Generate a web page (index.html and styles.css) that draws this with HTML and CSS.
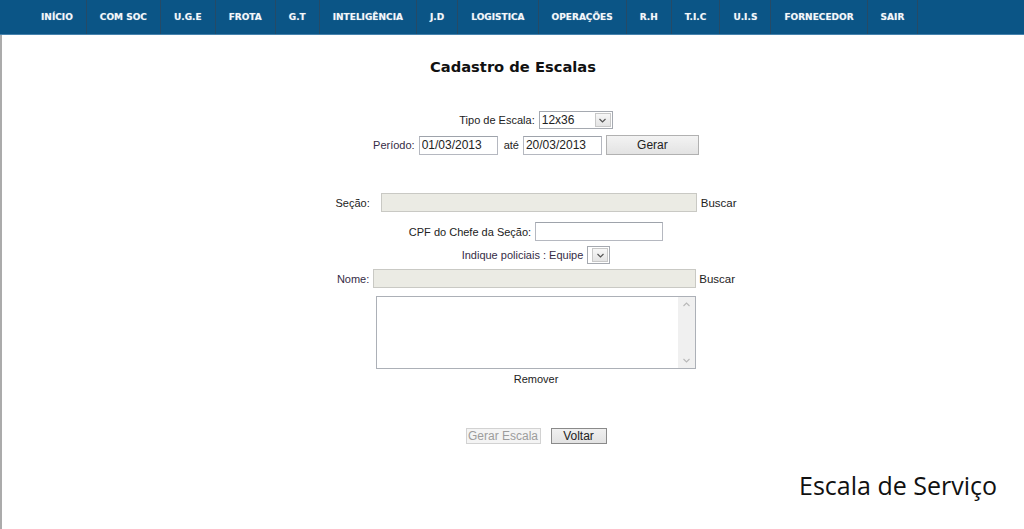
FILE: index.html
```html
<!DOCTYPE html>
<html lang="pt-br">
<head>
  <meta charset="UTF-8" />
  <title>Cadastro de Escalas</title>
  <link rel="stylesheet" href="styles.css">
</head>
<body>
  <header class="topo">
    <ul class="menu">
      <li><a href="#">INÍCIO</a></li>
      <li><a href="#">COM SOC</a></li>
      <li><a href="#">U.G.E</a></li>
      <li><a href="#">FROTA</a></li>
      <li><a href="#">G.T</a></li>
      <li><a href="#">INTELIGÊNCIA</a></li>
      <li><a href="#">J.D</a></li>
      <li><a href="#">LOGISTICA</a></li>
      <li><a href="#">OPERAÇÕES</a></li>
      <li><a href="#">R.H</a></li>
      <li><a href="#">T.I.C</a></li>
      <li><a href="#">U.I.S</a></li>
      <li><a href="#">FORNECEDOR</a></li>
      <li><a href="#">SAIR</a></li>
    </ul>
  </header>

  <main class="pagina">
    <h1 class="titulo">Cadastro de Escalas</h1>

    <form class="form">
      <div class="linha linha-tipo">
        <label>Tipo de Escala:</label>
        <div class="combo combo-tipo">
          <span class="combo-valor">12x36</span>
          <span class="combo-seta"><svg width="7" height="5" viewBox="0 0 7 5"><path d="M0.5 1 L3.5 4 L6.5 1" fill="none" stroke="#555" stroke-width="1.2"/></svg></span>
        </div>
      </div>

      <div class="linha linha-periodo">
        <label class="roxo">Período:</label>
        <input class="campo campo-data" type="text" value="01/03/2013">
        <label class="ate">até</label>
        <input class="campo campo-data" type="text" value="20/03/2013">
        <button type="button" class="botao botao-gerar">Gerar</button>
      </div>

      <div class="linha linha-secao">
        <label class="lbl-secao">Seção:</label>
        <input class="campo campo-off campo-secao" type="text" disabled>
        <a href="#" class="buscar">Buscar</a>
      </div>

      <div class="linha linha-cpf">
        <label>CPF do Chefe da Seção:</label>
        <input class="campo campo-cpf" type="text">
      </div>

      <div class="linha linha-equipe">
        <label class="roxo">Indique policiais : Equipe</label>
        <div class="combo combo-equipe">
          <span class="combo-valor"></span>
          <span class="combo-seta"><svg width="7" height="5" viewBox="0 0 7 5"><path d="M0.5 1 L3.5 4 L6.5 1" fill="none" stroke="#555" stroke-width="1.2"/></svg></span>
        </div>
      </div>

      <div class="linha linha-nome">
        <label class="roxo">Nome:</label>
        <input class="campo campo-off campo-nome" type="text" disabled>
        <a href="#" class="buscar buscar-nome">Buscar</a>
      </div>

      <div class="linha linha-lista">
        <div class="lista">
          <div class="lista-area"></div>
          <div class="lista-barra">
            <svg width="7" height="5" viewBox="0 0 7 5"><path d="M0.5 4 L3.5 1 L6.5 4" fill="none" stroke="#b8b8b8" stroke-width="1.1"/></svg>
            <svg width="7" height="5" viewBox="0 0 7 5"><path d="M0.5 1 L3.5 4 L6.5 1" fill="none" stroke="#b8b8b8" stroke-width="1.1"/></svg>
          </div>
        </div>
      </div>

      <div class="linha linha-remover">
        <a href="#" class="remover">Remover</a>
      </div>

      <div class="linha linha-botoes">
        <button type="button" class="botao botao-off" disabled>Gerar Escala</button>
        <button type="button" class="botao botao-voltar">Voltar</button>
      </div>
    </form>

    <div class="legenda">Escala de Serviço</div>
  </main>
</body>
</html>
```

FILE: styles.css
```css
body {
  margin: 0;
  background-color: white;
  font-family: "Liberation Sans", Arial, sans-serif;
  font-size: 11px;
  color: #222;
  overflow: hidden;
}

.topo {
  background-color: #0b5586;
  border-bottom: 1px solid #4682ad;
  height: 34px;
}

.menu {
  list-style: none;
  margin: 0;
  padding: 0 0 0 28px;
  display: flex;
  height: 34px;
}

.menu li {
  border-right: 1px solid #254a66;
  display: flex;
  align-items: center;
}

.menu a {
  color: #f4f7fa;
  text-decoration: none;
  font-family: "DejaVu Sans", Verdana, sans-serif;
  font-weight: bold;
  font-size: 9px;
  padding: 0 13px;
  text-shadow: 0 0 1px rgba(255, 255, 255, 0.4);
}

.pagina {
  border-left: 2px solid #ababab;
  height: 494px;
  display: flex;
  flex-direction: column;
}

.titulo {
  margin: 23px 0 0 0;
  height: 18px;
  line-height: 18px;
  text-align: center;
  font-family: "DejaVu Sans", Verdana, sans-serif;
  font-size: 14.7px;
  font-weight: bold;
  color: #111;
}

.form {
  padding-left: 46px;
  display: flex;
  flex-direction: column;
}

.linha {
  display: flex;
  justify-content: center;
  align-items: center;
}

.linha label {
  margin-right: 4px;
}

.roxo {
  color: #352c46;
}

.linha-tipo {
  margin-top: 35px;
  height: 18px;
}

.linha-periodo {
  margin-top: 6px;
  height: 20px;
}

.linha-secao {
  margin-top: 38px;
  height: 19px;
}

.linha-cpf {
  margin-top: 10px;
  height: 19px;
}

.linha-equipe {
  margin-top: 5px;
  height: 18px;
}

.linha-nome {
  margin-top: 5px;
  height: 19px;
}

.linha-lista {
  margin-top: 8px;
}

.linha-remover {
  margin-top: 3px;
  height: 14px;
}

.linha-botoes {
  margin-top: 42px;
  height: 16px;
}

/* campos */
.campo {
  box-sizing: border-box;
  height: 19px;
  border: 1px solid #b5b8c0;
  border-top-color: #9ea3ab;
  padding: 0 2px;
  font-family: "Liberation Sans", Arial, sans-serif;
  font-size: 12px;
  color: #222;
  background: white;
}

.campo-data {
  width: 79px;
}

.ate {
  margin-left: 6px;
}

.campo-off {
  background-color: #ebebe4;
  border-color: #c9c9c4;
}

.campo-secao {
  width: 316px;
  margin-left: 7px;
}

.campo-nome {
  width: 323px;
}

.campo-cpf {
  width: 128px;
}

.buscar {
  color: #222;
  text-decoration: none;
  margin-left: 4px;
  font-size: 11.5px;
}

.buscar-nome {
  margin-left: 3px;
}

/* combos */
.combo {
  box-sizing: border-box;
  height: 18px;
  border: 1px solid #a5a9b0;
  display: flex;
  align-items: stretch;
  background: white;
}

.combo-tipo {
  width: 74px;
}

.combo-equipe {
  width: 23px;
}

.combo-valor {
  flex: 1;
  padding-left: 2px;
  font-size: 12px;
  line-height: 16px;
}

.combo-seta {
  width: 14px;
  margin: 1px;
  border: 1px solid #c8c8c8;
  background: linear-gradient(#f7f7f7, #e4e4e4);
  display: flex;
  align-items: center;
  justify-content: center;
}

/* botoes */
.botao {
  box-sizing: border-box;
  font-family: "Liberation Sans", Arial, sans-serif;
  font-size: 12px;
  color: #222;
  border: 1px solid #b1b1b1;
  background: linear-gradient(#f3f3f3, #e3e3e3);
  padding: 0;
}

.botao-gerar {
  width: 93px;
  height: 20px;
  margin-left: 4px;
}

.botao-off {
  width: 75px;
  height: 16px;
  color: #9c9c9c;
  background: #f4f4f4;
  border-color: #d2d2d2;
}

.botao-voltar {
  width: 56px;
  height: 16px;
  margin-left: 10px;
  border-color: #8a8a8a;
  background: linear-gradient(#f0f0f0, #e2e2e2);
}

/* lista */
.lista {
  box-sizing: border-box;
  width: 320px;
  height: 73px;
  border: 1px solid #acb0b7;
  display: flex;
}

.lista-area {
  flex: 1;
}

.lista-barra {
  width: 17px;
  background: #f0f0f0;
  display: flex;
  flex-direction: column;
  justify-content: space-between;
  align-items: center;
  padding: 5px 0;
}

.remover {
  color: #222;
  text-decoration: none;
  font-size: 11px;
}

.legenda {
  margin-top: 24px;
  align-self: flex-end;
  margin-right: 27px;
  font-family: "Open Sans", "Noto Sans", sans-serif;
  font-size: 25px;
  color: #111;
}
```
